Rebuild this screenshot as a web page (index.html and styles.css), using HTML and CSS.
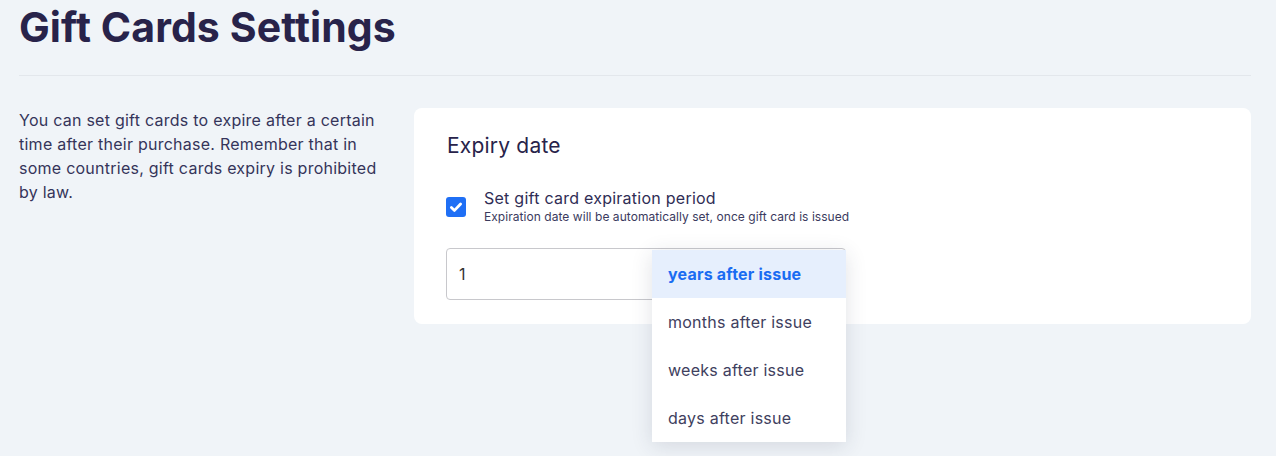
FILE: index.html
```html
<!DOCTYPE html>
<html>
<head>
<meta charset="utf-8">
<link rel="stylesheet" href="styles.css">
</head>
<body>
<div class="page">
  <h1 class="title">Gift Cards Settings</h1>
  <div class="divider"></div>
  <div class="content">
    <p class="desc">You can set gift cards to expire after a certain time after their purchase. Remember that in some countries, gift cards expiry is prohibited by law.</p>
    <div class="card">
      <h2 class="card-title">Expiry date</h2>
      <div class="check-row">
        <span class="checkbox">
          <svg width="14" height="14" viewBox="0 0 14 14"><path d="M2.4 7.4l3.1 3 6.1-6.4" fill="none" stroke="#fff" stroke-width="2.8" stroke-linecap="round" stroke-linejoin="round"/></svg>
        </span>
        <div class="check-text">
          <div class="check-label">Set gift card expiration period</div>
          <div class="check-help">Expiration date will be automatically set, once gift card is issued</div>
        </div>
      </div>
      <div class="field-wrap">
        <div class="field">1</div>
        <ul class="menu">
          <li class="menu-item active">years after issue</li>
          <li class="menu-item">months after issue</li>
          <li class="menu-item">weeks after issue</li>
          <li class="menu-item">days after issue</li>
        </ul>
      </div>
    </div>
  </div>
</div>
</body>
</html>
```
FILE: styles.css
```css
html, body {
  margin: 0;
  padding: 0;
  background: #f0f4f8;
  font-family: Inter, "Noto Sans", sans-serif;
  color: #2a2850;
}
body {
  min-height: 456px;
}
.page {
  padding: 3px 25px 0 19px;
}
.title {
  margin: 0;
  font-size: 41px;
  line-height: 48px;
  font-weight: 700;
  color: #28234a;
  letter-spacing: 0.1px;
}
.divider {
  margin-top: 24px;
  height: 1px;
  background: #e3e7ec;
}
.content {
  display: grid;
  grid-template-columns: 363px 1fr;
  column-gap: 32px;
  margin-top: 32px;
}
.desc {
  margin: 0;
  font-size: 16px;
  line-height: 24px;
  color: #35345a;
  letter-spacing: 0.25px;
}
.card {
  background: #fff;
  border-radius: 8px;
  padding: 26px 32px 24px 32px;
}
.card-title {
  margin: 0 0 0 1px;
  font-size: 21px;
  line-height: 24px;
  font-weight: 400;
  color: #28234a;
  letter-spacing: 0.2px;
}
.check-row {
  display: flex;
  align-items: center;
  gap: 18px;
  margin-top: 30px;
}
.checkbox {
  width: 20px;
  height: 20px;
  border-radius: 3px;
  background: #1f6ff5;
  display: flex;
  align-items: center;
  justify-content: center;
  flex: none;
}
.check-label {
  font-size: 16px;
  line-height: 20px;
  color: #2f2d55;
  letter-spacing: 0.25px;
}
.check-help {
  font-size: 12px;
  line-height: 17px;
  color: #3b3a5e;
  letter-spacing: 0.05px;
}
.field-wrap {
  position: relative;
  width: 400px;
  margin-top: 23px;
}
.field {
  height: 50px;
  border: 1px solid #c8c8cc;
  border-radius: 4px;
  padding: 0 12px;
  font-size: 16px;
  line-height: 50px;
  color: #333;
}
.menu {
  position: absolute;
  z-index: 5;
  left: 206px;
  top: 2px;
  width: 194px;
  margin: 0;
  padding: 0;
  list-style: none;
  background: #fff;
  box-shadow: 0 4px 20px rgba(40, 50, 80, 0.14);
}
.menu-item {
  height: 48px;
  line-height: 48px;
  padding-left: 16px;
  font-size: 16px;
  color: #40405e;
  letter-spacing: 0.25px;
}
.menu-item.active {
  background: #e6effd;
  color: #1a6cf2;
  font-weight: 700;
  letter-spacing: 0.2px;
}
```
